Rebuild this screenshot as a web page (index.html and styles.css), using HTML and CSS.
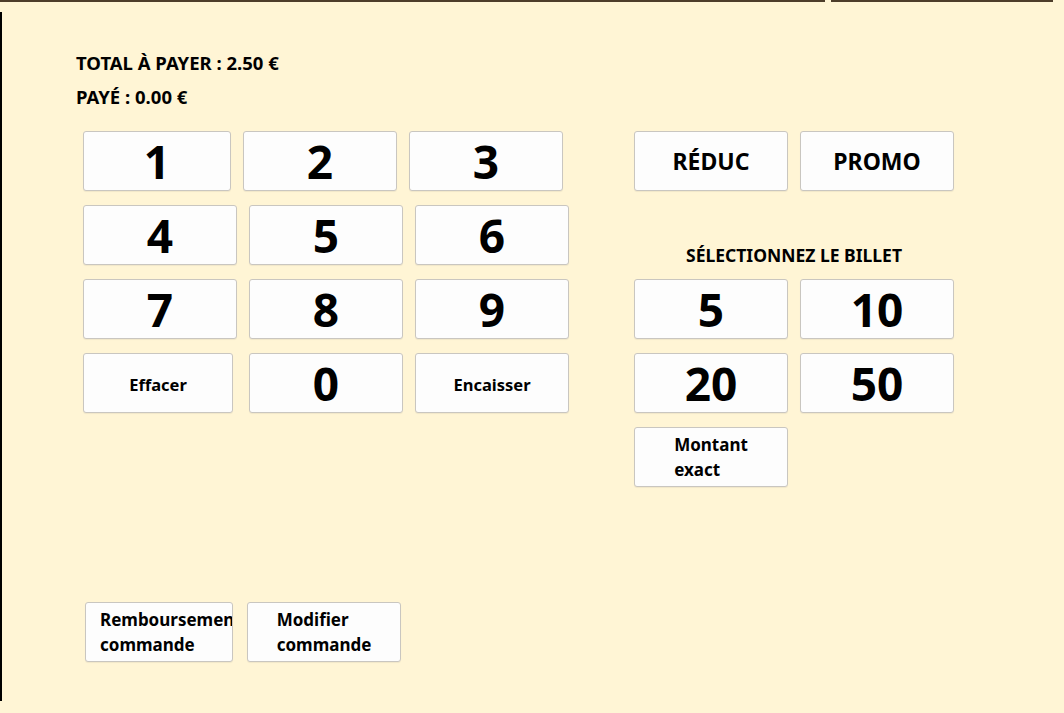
FILE: index.html
```html
<!DOCTYPE html>
<html lang="fr">
<head>
<meta charset="utf-8">
<title>Paiement</title>
<link rel="stylesheet" href="styles.css">
</head>
<body>
<div class="topbar">
  <div class="seg seg-a"></div>
  <div class="seg seg-b"></div>
</div>
<div class="panel">
  <div class="totals">
    <div class="total-line">TOTAL À PAYER : 2.50 €</div>
    <div class="total-line">PAYÉ : 0.00 €</div>
  </div>
  <div class="pads">
    <div class="keypad">
      <div class="row">
        <button class="btn digit w148">1</button>
        <button class="btn digit">2</button>
        <button class="btn digit">3</button>
      </div>
      <div class="row">
        <button class="btn digit">4</button>
        <button class="btn digit">5</button>
        <button class="btn digit">6</button>
      </div>
      <div class="row">
        <button class="btn digit">7</button>
        <button class="btn digit">8</button>
        <button class="btn digit">9</button>
      </div>
      <div class="row">
        <button class="btn small w150 spaced">Effacer</button>
        <button class="btn digit">0</button>
        <button class="btn small">Encaisser</button>
      </div>
    </div>
    <div class="side">
      <div class="row">
        <button class="btn word">RÉDUC</button>
        <button class="btn word">PROMO</button>
      </div>
      <div class="label">SÉLECTIONNEZ LE BILLET</div>
      <div class="row">
        <button class="btn digit">5</button>
        <button class="btn digit">10</button>
      </div>
      <div class="row">
        <button class="btn digit">20</button>
        <button class="btn digit">50</button>
      </div>
      <div class="row">
        <button class="btn multi"><span class="inner">Montant<br>exact</span></button>
      </div>
    </div>
  </div>
  <div class="bottom">
    <button class="btn multi w148"><span class="inner">Remboursement<br>commande</span></button>
    <button class="btn multi"><span class="inner">Modifier<br>commande</span></button>
  </div>
</div>
</body>
</html>
```

FILE: styles.css
```css
html, body {
  margin: 0;
  padding: 0;
  background: #fff5d5;
  font-family: "Noto Sans", "Open Sans", "DejaVu Sans", sans-serif;
  color: #000;
}
body {
  width: 1064px;
  height: 713px;
  overflow: hidden;
}
.topbar {
  display: flex;
  gap: 6px;
  height: 2px;
}
.seg {
  height: 2px;
  background: #4d3d2a;
}
.seg-a { width: 825px; }
.seg-b { width: 222px; }

.panel {
  margin-top: 10px;
  height: 689px;
  border-left: 2px solid #000;
  box-sizing: border-box;
  padding-left: 74px;
  display: flex;
  flex-direction: column;
}
.totals {
  padding-top: 39px;
  display: flex;
  flex-direction: column;
  gap: 10px;
}
.total-line {
  font-size: 18.5px;
  font-weight: 700;
  line-height: 24px;
}
.pads {
  display: flex;
  margin-top: 22px;
  margin-left: 7px;
  gap: 65px;
}
.keypad, .side {
  display: flex;
  flex-direction: column;
  gap: 14px;
}
.row {
  display: flex;
  gap: 12px;
}
.btn {
  width: 154px;
  height: 60px;
  box-sizing: border-box;
  background: #fdfdfd;
  border: 1px solid #c9c6c0;
  border-radius: 3px;
  font-family: inherit;
  color: #000;
  font-weight: 700;
  padding: 0 14px;
  text-align: center;
  overflow: hidden;
  white-space: nowrap;
  box-shadow: 0 1px 1px rgba(0,0,0,0.06);
}
.w148 { width: 148px; }
.w150 { width: 150px; }
.spaced { margin-right: 4px; }
.digit {
  font-size: 46px;
  line-height: 1.2;
  padding-top: 2px;
}
.word {
  font-size: 23px;
}
.small {
  font-size: 16.5px;
  padding-top: 3px;
}
.multi {
  font-size: 17px;
  line-height: 25px;
  text-align: center;
}
.inner {
  display: inline-block;
  text-align: left;
  vertical-align: middle;
}
.label {
  height: 32px;
  margin-top: 34px;
  margin-bottom: -6px;
  display: flex;
  align-items: center;
  justify-content: center;
  font-size: 17.5px;
  font-weight: 700;
  width: 320px;
}
.bottom {
  margin-top: auto;
  margin-bottom: 39px;
  margin-left: 9px;
  display: flex;
  gap: 14px;
}
```
